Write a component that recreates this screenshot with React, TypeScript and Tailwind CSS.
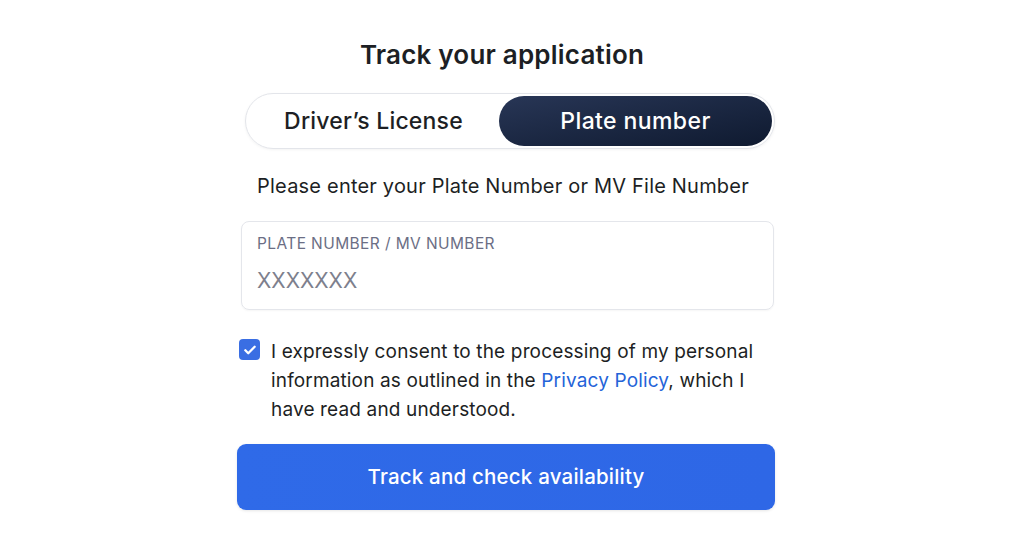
import { useState } from "react";

export default function App() {
  const [mode, setMode] = useState<"license" | "plate">("plate");
  const [agreed, setAgreed] = useState(true);

  return (
    <div
      className="min-h-[536px] w-full bg-white text-[#1d1f24]"
      style={{ fontFamily: "Inter, 'Noto Sans', sans-serif" }}
    >
      <div className="ml-[237px] w-[538px] flex flex-col">
        {/* heading */}
        <h1 className="mt-[38px] text-center text-[26px] leading-[34px] font-semibold tracking-[0.2px] pr-[8px]">
          Track your application
        </h1>

        {/* segmented toggle */}
        <div className="mt-[21px] ml-[8px] h-[56px] rounded-full border border-[#e3e5ea] p-[2px] flex shadow-[0_1px_3px_rgba(0,0,0,0.05)]">
          <button
            onClick={() => setMode("license")}
            className={`flex-1 rounded-full text-[23px] font-medium tracking-[0.2px] ${
              mode === "license"
                ? "bg-gradient-to-br from-[#283656] to-[#0f1a30] text-white"
                : "text-[#1d1f24]"
            }`}
          >
            Driver’s License
          </button>
          <button
            onClick={() => setMode("plate")}
            className={`w-[273px] rounded-full text-[23px] font-medium tracking-[0.4px] ${
              mode === "plate"
                ? "bg-gradient-to-br from-[#283656] to-[#0f1a30] text-white"
                : "text-[#1d1f24]"
            }`}
          >
            Plate number
          </button>
        </div>

        {/* instructions */}
        <p className="mt-[23px] text-center text-[20px] leading-[28px] tracking-[0.2px] pr-[6px]">
          Please enter your Plate Number or MV File Number
        </p>

        {/* input */}
        <label className="mt-[21px] ml-[4px] mr-[1px] h-[89px] rounded-[8px] border border-[#e4e6eb] px-[15px] pt-[12px] flex flex-col shadow-[0_1px_2px_rgba(0,0,0,0.04)]">
          <span className="text-[15.5px] leading-[20px] tracking-[0.4px] text-[#6b6e85] uppercase">
            Plate number / MV number
          </span>
          <input
            type="text"
            placeholder="XXXXXXX"
            className="mt-[12px] text-[21px] leading-[30px] outline-none placeholder:text-[#7d808d] text-[#1d1f24]"
          />
        </label>

        {/* consent */}
        <div className="mt-[27px] flex gap-[11px]">
          <button
            onClick={() => setAgreed(!agreed)}
            className={`mt-[2px] ml-[2px] w-[21px] h-[21px] shrink-0 rounded-[4px] flex items-center justify-center ${
              agreed ? "bg-[#3a6ee3]" : "border border-gray-300"
            }`}
          >
            {agreed && (
              <svg width="14" height="14" viewBox="0 0 24 24" fill="none">
                <path
                  d="M4 12.5l5 5L20 6.5"
                  stroke="white"
                  strokeWidth="4"
                  strokeLinecap="round"
                  strokeLinejoin="round"
                />
              </svg>
            )}
          </button>
          <p className="text-[19px] leading-[29px] tracking-[0.15px] text-[#1d1f24]">
            I expressly consent to the processing of my personal information as outlined in the{" "}
            <a href="#" className="text-[#2463d8]">
              Privacy Policy
            </a>
            , which I have read and understood.
          </p>
        </div>

        {/* submit */}
        <button className="mt-[20px] h-[66px] rounded-[9px] bg-gradient-to-r from-[#2f6ae8] to-[#2e67e6] text-white text-[20.5px] font-medium tracking-[0.2px] shadow-[0_1px_3px_rgba(0,0,0,0.1)]">
          Track and check availability
        </button>
      </div>
    </div>
  );
}
